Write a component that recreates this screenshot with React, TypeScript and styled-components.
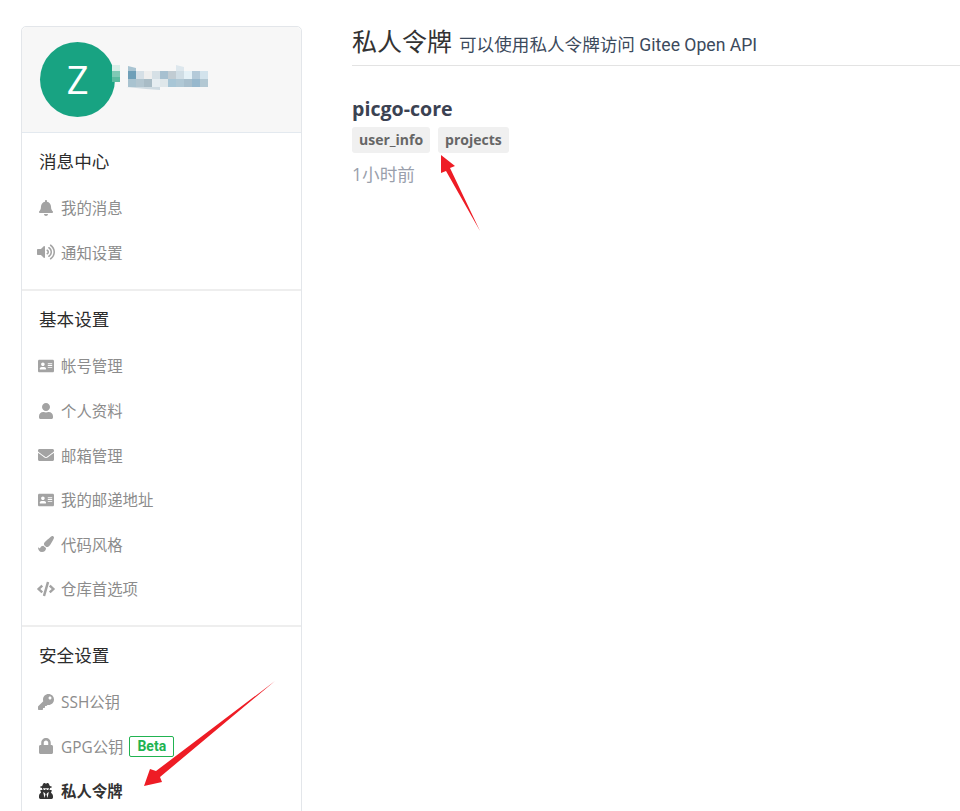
import { ReactNode } from "react";
import styled, { createGlobalStyle } from "styled-components";
import {
  FaAddressCard,
  FaBell,
  FaCode,
  FaEnvelope,
  FaKey,
  FaLock,
  FaPaintBrush,
  FaUser,
  FaUserSecret,
  FaVolumeUp,
} from "react-icons/fa";

const GlobalStyle = createGlobalStyle`
  html, body {
    margin: 0;
    padding: 0;
    height: 100%;
    overflow: hidden;
    background-color: #fff;
    font-family: "Open Sans", "Noto Sans CJK SC", sans-serif;
  }
`;

const Page = styled.div`
  position: relative;
  display: flex;
  align-items: flex-start;
  gap: 50px;
  width: 960px;
  height: 811px;
  padding: 26px 0 0 21px;
  box-sizing: border-box;
  overflow: hidden;
`;

const Sidebar = styled.aside`
  flex: none;
  width: 281px;
  box-sizing: border-box;
  border: 1px solid #e3e6ea;
  border-radius: 5px;
`;

const Profile = styled.div`
  display: flex;
  align-items: center;
  height: 106px;
  padding: 0 0 0 18px;
  box-sizing: border-box;
  background-color: #f7f7f7;
  border-bottom: 1px solid #e3e9ef;
  border-radius: 5px 5px 0 0;
`;

const Avatar = styled.div`
  flex: none;
  display: flex;
  align-items: center;
  justify-content: center;
  width: 75px;
  height: 75px;
  margin-top: -1px;
  border-radius: 50%;
  background-color: #18a382;
  color: #fff;
  font-size: 38px;
`;

const NameMosaic = styled.svg`
  margin-left: -3px;
`;

const Section = styled.section<{ $divided?: boolean }>`
  padding: 10px 0 ${(p) => (p.$divided ? "13.5px" : "14.5px")};
  border-top: ${(p) => (p.$divided ? "2px solid #eeeeee" : "none")};
`;

const SectionTitle = styled.h3`
  margin: 0 0 6.5px 17px;
  height: 36px;
  line-height: 36px;
  font-size: 17.6px;
  font-weight: 400;
  color: #2c2c2c;
`;

const Item = styled.div<{ $active?: boolean }>`
  display: flex;
  align-items: center;
  height: 44.6px;
  padding-left: 15px;
  font-size: 15.4px;
  font-weight: ${(p) => (p.$active ? 700 : 400)};
  color: ${(p) => (p.$active ? "#333333" : "#8c8c8c")};
`;

const IconSlot = styled.span<{ $active?: boolean }>`
  flex: none;
  display: flex;
  align-items: center;
  justify-content: center;
  width: 18px;
  margin-right: 6px;
  color: ${(p) => (p.$active ? "#333333" : "#a3a3a3")};
`;

const BetaTag = styled.span`
  margin-left: 6px;
  padding: 0 7px;
  height: 21px;
  line-height: 19px;
  box-sizing: border-box;
  border: 1px solid #21b351;
  border-radius: 2px;
  font-family: Roboto, sans-serif;
  font-size: 14px;
  font-weight: 700;
  color: #21b351;
`;

const Main = styled.main`
  flex: 1;
`;

const Heading = styled.div`
  display: flex;
  align-items: baseline;
  gap: 7px;
  height: 39px;
  border-bottom: 1px solid #e3e3e3;
  line-height: 31px;
`;

const HeadingTitle = styled.h1`
  margin: 0;
  font-size: 25px;
  font-weight: 400;
  color: #333333;
`;

const HeadingSub = styled.span`
  font-family: Roboto, "Noto Sans CJK SC", sans-serif;
  font-size: 17.6px;
  color: #3c4a5c;
`;

const TokenName = styled.div`
  margin-top: 30px;
  line-height: 26px;
  font-size: 19.6px;
  font-weight: 700;
  color: #3b4252;
`;

const Scopes = styled.div`
  display: flex;
  gap: 8px;
  margin-top: 5px;
`;

const Scope = styled.span`
  height: 26px;
  padding: 0 7px;
  line-height: 26px;
  border-radius: 3px;
  background-color: #f0f0f0;
  font-size: 14px;
  font-weight: 700;
  color: #666666;
`;

const TimeAgo = styled.div`
  margin-top: 8px;
  line-height: 26px;
  font-size: 17.6px;
  color: #9a9fac;
`;

const Arrows = styled.svg`
  position: absolute;
  top: 0;
  left: 0;
  pointer-events: none;
`;

const mosaic = [
  ["#6f9fb8", "#d5dfe6", "#eeeeee", "#d6e0e6", "#a7c0d0", "#c1ccd3", "#cfdde5", "#e4f1f7", "#b4cad9", "#d3e3ec"],
  ["#a9c3d0", "#b3c6d0", "#a9bcc6", "#e6edf1", "#dfe7ea", "#a8c6d6", "#b0c8d5", "#a8bfcd", "#97b8cd", "#b3c8d3"],
];

// username is pixelated in the screenshot, so it is a small mosaic drawing
function BlurredName() {
  return (
    <NameMosaic width="96" height="30" viewBox="0 0 96 30">
      <rect x="0" y="0" width="8" height="6" fill="#d9eee8" />
      <rect x="0" y="6" width="8" height="6" fill="#7fc9b5" />
      <rect x="0" y="12" width="8" height="5" fill="#5cbba0" />
      <polygon points="16,1 24,3 24,6 16,6" fill="#a9c4d2" />
      <polygon points="64,0 72,2 72,6 64,6" fill="#dde7ed" />
      <polygon points="14,22 48,22 48,25 34,24" fill="#cfdbe2" />
      {mosaic.map((row, r) =>
        row.map((color, c) => (
          <rect key={`${r}-${c}`} x={16 + c * 8} y={6 + r * 8} width="8" height="8" fill={color} />
        ))
      )}
    </NameMosaic>
  );
}

type Row = { icon: ReactNode; label: string; beta?: boolean; active?: boolean };

const sections: { title: string; rows: Row[] }[] = [
  {
    title: "消息中心",
    rows: [
      { icon: <FaBell size={16} />, label: "我的消息" },
      { icon: <FaVolumeUp size={18} />, label: "通知设置" },
    ],
  },
  {
    title: "基本设置",
    rows: [
      { icon: <FaAddressCard size={16} />, label: "帐号管理" },
      { icon: <FaUser size={16} />, label: "个人资料" },
      { icon: <FaEnvelope size={16} />, label: "邮箱管理" },
      { icon: <FaAddressCard size={16} />, label: "我的邮递地址" },
      { icon: <FaPaintBrush size={16} />, label: "代码风格" },
      { icon: <FaCode size={18} />, label: "仓库首选项" },
    ],
  },
  {
    title: "安全设置",
    rows: [
      { icon: <FaKey size={16} />, label: "SSH公钥" },
      { icon: <FaLock size={16} />, label: "GPG公钥", beta: true },
      { icon: <FaUserSecret size={16} />, label: "私人令牌", active: true },
    ],
  },
];

export default function App() {
  return (
    <>
      <GlobalStyle />
      <Page>
        <Sidebar>
          <Profile>
            <Avatar>Z</Avatar>
            <BlurredName />
          </Profile>
          {sections.map((section, i) => (
            <Section key={section.title} $divided={i > 0}>
              <SectionTitle>{section.title}</SectionTitle>
              {section.rows.map((row) => (
                <Item key={row.label} $active={row.active}>
                  <IconSlot $active={row.active}>{row.icon}</IconSlot>
                  {row.label}
                  {row.beta && <BetaTag>Beta</BetaTag>}
                </Item>
              ))}
            </Section>
          ))}
        </Sidebar>
        <Main>
          <Heading>
            <HeadingTitle>私人令牌</HeadingTitle>
            <HeadingSub>可以使用私人令牌访问 Gitee Open API</HeadingSub>
          </Heading>
          <TokenName>picgo-core</TokenName>
          <Scopes>
            <Scope>user_info</Scope>
            <Scope>projects</Scope>
          </Scopes>
          <TimeAgo>1小时前</TimeAgo>
        </Main>
        <Arrows width="960" height="811" viewBox="0 0 960 811">
          <polygon points="275,681 156,771 150,769 144,786 162,782 160,777" fill="#ee1c25" />
          <polygon points="480,231 450,168 455,166 441,155 441,173 446,171" fill="#ee1c25" />
        </Arrows>
      </Page>
    </>
  );
}
